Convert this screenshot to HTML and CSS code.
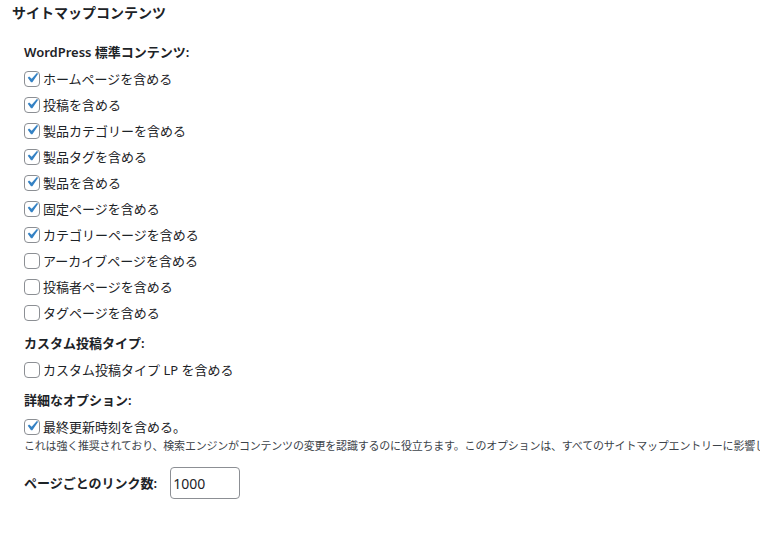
FILE: index.html
```html
<!DOCTYPE html>
<html>
  <head>
    <meta http-equiv="Content-Type" content="text/html; charset=utf-8">
    <link rel="stylesheet" href="styles.css">
  </head>
  <body>
    <h2 class="title">サイトマップコンテンツ</h2>
    <div class="opts">
      <div class="group-title">WordPress 標準コンテンツ:</div>
      <div class="row"><span class="cb on"><svg viewBox="0 0 20 20"><path d="M14.83 4.89l1.34.94-5.81 8.38H9.02L5.78 9.67l1.34-1.25 2.57 2.4z"/></svg></span>ホームページを含める</div>
      <div class="row"><span class="cb on"><svg viewBox="0 0 20 20"><path d="M14.83 4.89l1.34.94-5.81 8.38H9.02L5.78 9.67l1.34-1.25 2.57 2.4z"/></svg></span>投稿を含める</div>
      <div class="row"><span class="cb on"><svg viewBox="0 0 20 20"><path d="M14.83 4.89l1.34.94-5.81 8.38H9.02L5.78 9.67l1.34-1.25 2.57 2.4z"/></svg></span>製品カテゴリーを含める</div>
      <div class="row"><span class="cb on"><svg viewBox="0 0 20 20"><path d="M14.83 4.89l1.34.94-5.81 8.38H9.02L5.78 9.67l1.34-1.25 2.57 2.4z"/></svg></span>製品タグを含める</div>
      <div class="row"><span class="cb on"><svg viewBox="0 0 20 20"><path d="M14.83 4.89l1.34.94-5.81 8.38H9.02L5.78 9.67l1.34-1.25 2.57 2.4z"/></svg></span>製品を含める</div>
      <div class="row"><span class="cb on"><svg viewBox="0 0 20 20"><path d="M14.83 4.89l1.34.94-5.81 8.38H9.02L5.78 9.67l1.34-1.25 2.57 2.4z"/></svg></span>固定ページを含める</div>
      <div class="row"><span class="cb on"><svg viewBox="0 0 20 20"><path d="M14.83 4.89l1.34.94-5.81 8.38H9.02L5.78 9.67l1.34-1.25 2.57 2.4z"/></svg></span>カテゴリーページを含める</div>
      <div class="row"><span class="cb"></span>アーカイブページを含める</div>
      <div class="row"><span class="cb"></span>投稿者ページを含める</div>
      <div class="row"><span class="cb"></span>タグページを含める</div>

      <div class="group-title sep">カスタム投稿タイプ:</div>
      <div class="row"><span class="cb"></span>カスタム投稿タイプ LP を含める</div>

      <div class="group-title sep">詳細なオプション:</div>
      <div class="row"><span class="cb on"><svg viewBox="0 0 20 20"><path d="M14.83 4.89l1.34.94-5.81 8.38H9.02L5.78 9.67l1.34-1.25 2.57 2.4z"/></svg></span>最終更新時刻を含める。</div>
      <p class="desc">これは強く推奨されており、検索エンジンがコンテンツの変更を認識するのに役立ちます。このオプションは、すべてのサイトマップエントリーに影響します。</p>

      <div class="links">
        <label class="group-title" for="per">ページごとのリンク数:</label>
        <input type="text" id="per" class="num" value="1000">
      </div>
    </div>
  </body>
</html>
```

FILE: styles.css
```css
html { background: #fff; }
body { margin: 0; padding: 0 0 0 12px; color: #1d2327; font-family: "Noto Sans", "Noto Sans CJK JP", sans-serif; font-size: 13px; overflow: hidden; width: 748px; }
.title { margin: 0; font-size: 14px; line-height: 26px; font-weight: 700; }
.opts { padding: 13px 0 0 12px; }
.group-title { font-weight: 600; line-height: 26px; font-size: 13px; }
.group-title.sep { margin-top: 5px; }
.row { display: flex; align-items: center; height: 26px; gap: 3px; }
.cb { width: 16px; height: 16px; box-sizing: border-box; border: 1px solid #8c8f94; border-radius: 4px; background: #fff; display: inline-flex; align-items: center; justify-content: center; margin-top: 1px; }
.cb svg { width: 20px; height: 20px; fill: #3582c4; margin: -2px -3px 0 -3px; }
.desc { margin: 0; font-size: 11px; line-height: 14px; letter-spacing: -0.2px; color: #3c434a; white-space: nowrap; overflow: hidden; }
.links { display: flex; align-items: center; gap: 13px; margin-top: 14px; }
.num { width: 70px; height: 32px; box-sizing: border-box; border: 1px solid #8c8f94; border-radius: 4px; padding: 0 2px; font-family: "Noto Sans", sans-serif; font-size: 14px; color: #1d2327; }
```
